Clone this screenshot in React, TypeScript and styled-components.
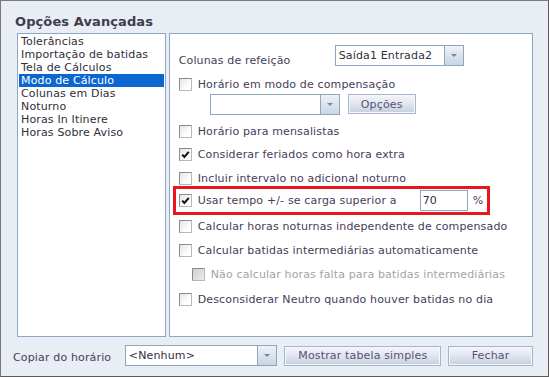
import React from 'react';
import styled, { createGlobalStyle, css } from 'styled-components';

const GlobalStyle = createGlobalStyle`
  html, body {
    margin: 0;
    padding: 0;
    background: #e9eef5;
  }
  * {
    box-sizing: border-box;
  }
`;

const TEXT = '#463d5a';
const FIELD_BORDER = '#8fa6c3';

const Window = styled.div`
  width: 549px;
  height: 377px;
  border: 1px solid #7a7a7a;
  border-right-color: #5c5c5c;
  border-bottom-color: #5c5c5c;
  background: #e9eef5;
  font-family: 'DejaVu Sans', Verdana, sans-serif;
  font-size: 11px;
  letter-spacing: 0.15px;
  color: ${TEXT};
  display: flex;
  flex-direction: column;
  padding: 13px 15px 0 16px;
`;

const Title = styled.h1`
  margin: 0 0 3px -2px;
  font-size: 13px;
  line-height: 16px;
  font-weight: bold;
  letter-spacing: 0.1px;
  color: #3f3c4e;
`;

const Body = styled.div`
  display: flex;
  gap: 3px;
  height: 304px;
`;

const List = styled.ul`
  list-style: none;
  margin: 0;
  padding: 1px;
  width: 149px;
  background: #fff;
  border: 1px solid ${FIELD_BORDER};
`;

const ListItem = styled.li<{ $selected?: boolean }>`
  height: 13px;
  line-height: 13px;
  padding-left: 2px;
  white-space: nowrap;
  color: #2f2f3a;
  ${(p) =>
    p.$selected &&
    css`
      background: #0a67d2;
      color: #fff;
    `}
`;

const Panel = styled.div`
  width: 365px;
  background: #fff;
  border: 1px solid ${FIELD_BORDER};
  padding: 11px 0 0 9px;
  display: flex;
  flex-direction: column;
`;

const MealRow = styled.div`
  display: flex;
  align-items: flex-end;
`;

const MealLabel = styled.span`
  width: 156px;
  line-height: 13px;
  margin-bottom: -1px;
`;

const Combo = styled.div<{ $width: number }>`
  width: ${(p) => p.$width}px;
  height: 21px;
  border: 1px solid ${FIELD_BORDER};
  background: #fff;
  display: flex;
  color: #2f2f3a;
`;

const ComboValue = styled.span`
  flex: 1;
  padding-left: 3px;
  line-height: 19px;
  white-space: nowrap;
  overflow: hidden;
`;

const ComboArrow = styled.span`
  width: 19px;
  border-left: 1px solid ${FIELD_BORDER};
  background: linear-gradient(#eef2f7, #c9d5e4);
  display: flex;
  align-items: center;
  justify-content: center;

  &::after {
    content: '';
    border-left: 3px solid transparent;
    border-right: 3px solid transparent;
    border-top: 3px solid #7c8594;
  }
`;

const Row = styled.label<{ $indent?: boolean; $disabled?: boolean; $top: number }>`
  display: flex;
  align-items: center;
  height: 13px;
  line-height: 13px;
  margin-top: ${(p) => p.$top}px;
  margin-left: ${(p) => (p.$indent ? 13 : 0)}px;
  white-space: nowrap;
  color: ${(p) => (p.$disabled ? '#a3a3a8' : TEXT)};
`;

const Box = styled.span<{ $disabled?: boolean }>`
  width: 13px;
  height: 13px;
  flex: none;
  margin-right: 6px;
  border: 1px solid #8c8c8c;
  border-right-color: #b9b9b9;
  border-bottom-color: #b9b9b9;
  background: ${(p) =>
    p.$disabled ? 'linear-gradient(135deg, #cfcfcf, #ececec)' : 'linear-gradient(135deg, #e4e4e4, #ffffff 70%)'};
  display: flex;
  align-items: center;
  justify-content: center;
`;

const SubRow = styled.div`
  display: flex;
  align-items: flex-start;
  gap: 8px;
  margin: 3px 0 0 31px;
`;

const Button = styled.button<{ $width: number }>`
  width: ${(p) => p.$width}px;
  height: 20px;
  padding: 0;
  border: 1px solid #a5b6cc;
  box-shadow: inset 0 0 0 1px #f5f7fa;
  background: linear-gradient(#f3f5f9 0%, #e2e8f0 45%, #c4cfde 100%);
  font-family: 'DejaVu Sans', Verdana, sans-serif;
  font-size: 11px;
  letter-spacing: 0.15px;
  color: #5b4f78;
`;

const Highlight = styled.div`
  display: flex;
  align-items: center;
  width: 317px;
  margin: 1px 0 0 -6px;
  padding: 1px 0 1px 3px;
  border: 3px solid #e8161f;
  white-space: nowrap;
`;

const HighlightLabel = styled.span`
  flex: 1;
  white-space: nowrap;
`;

const PercentInput = styled.span`
  width: 48px;
  height: 21px;
  margin-right: 5px;
  border: 1px solid ${FIELD_BORDER};
  padding-left: 2px;
  line-height: 19px;
  color: #2f2f3a;
`;

const Percent = styled.span`
  width: 14px;
`;

const Footer = styled.div`
  display: flex;
  align-items: center;
  margin: 8px 0 0 -4px;
  gap: 7px;
`;

const FooterLabel = styled.span`
  width: 105px;
  margin-top: 3px;
  white-space: nowrap;
`;

const Check = () => (
  <svg width="9" height="9" viewBox="0 0 9 9">
    <path d="M1.2 4.6 L3.4 7 L7.8 1.8" fill="none" stroke="#111" strokeWidth="2" />
  </svg>
);

const items = [
  'Tolerâncias',
  'Importação de batidas',
  'Tela de Cálculos',
  'Modo de Cálculo',
  'Colunas em Dias',
  'Noturno',
  'Horas In Itinere',
  'Horas Sobre Aviso',
];

type Opt = { text: string; checked?: boolean; top: number; indent?: boolean; disabled?: boolean };

const lowerOptions: Opt[] = [
  { text: 'Calcular horas noturnas independente de compensado', top: 5 },
  { text: 'Calcular batidas intermediárias automaticamente', top: 11 },
  { text: 'Não calcular horas falta para batidas intermediárias', top: 11, indent: true, disabled: true },
  { text: 'Desconsiderar Neutro quando houver batidas no dia', top: 12 },
];

const Option: React.FC<{ opt: Opt }> = ({ opt }) => (
  <Row $top={opt.top} $indent={opt.indent} $disabled={opt.disabled}>
    <Box $disabled={opt.disabled}>{opt.checked && <Check />}</Box>
    {opt.text}
  </Row>
);

const App: React.FC = () => {
  return (
    <>
      <GlobalStyle />
      <Window>
        <Title>Opções Avançadas</Title>
        <Body>
          <List>
            {items.map((item) => (
              <ListItem key={item} $selected={item === 'Modo de Cálculo'}>
                {item}
              </ListItem>
            ))}
          </List>
          <Panel>
            <MealRow>
              <MealLabel>Colunas de refeição</MealLabel>
              <Combo $width={129}>
                <ComboValue>Saída1 Entrada2</ComboValue>
                <ComboArrow />
              </Combo>
            </MealRow>
            <Option opt={{ text: 'Horário em modo de compensação', top: 12 }} />
            <SubRow>
              <Combo $width={130}>
                <ComboValue />
                <ComboArrow />
              </Combo>
              <Button $width={68}>Opções</Button>
            </SubRow>
            <Option opt={{ text: 'Horário para mensalistas', top: 10 }} />
            <Option opt={{ text: 'Considerar feriados como hora extra', checked: true, top: 10 }} />
            <Option opt={{ text: 'Incluir intervalo no adicional noturno', top: 11 }} />
            <Highlight>
              <Box>
                <Check />
              </Box>
              <HighlightLabel>Usar tempo +/- se carga superior a</HighlightLabel>
              <PercentInput>70</PercentInput>
              <Percent>%</Percent>
            </Highlight>
            {lowerOptions.map((opt) => (
              <Option key={opt.text} opt={opt} />
            ))}
          </Panel>
        </Body>
        <Footer>
          <FooterLabel>Copiar do horário</FooterLabel>
          <Combo $width={153}>
            <ComboValue>&lt;Nenhum&gt;</ComboValue>
            <ComboArrow />
          </Combo>
          <Button $width={157}>Mostrar tabela simples</Button>
          <Button $width={85}>Fechar</Button>
        </Footer>
      </Window>
    </>
  );
};

export default App;
